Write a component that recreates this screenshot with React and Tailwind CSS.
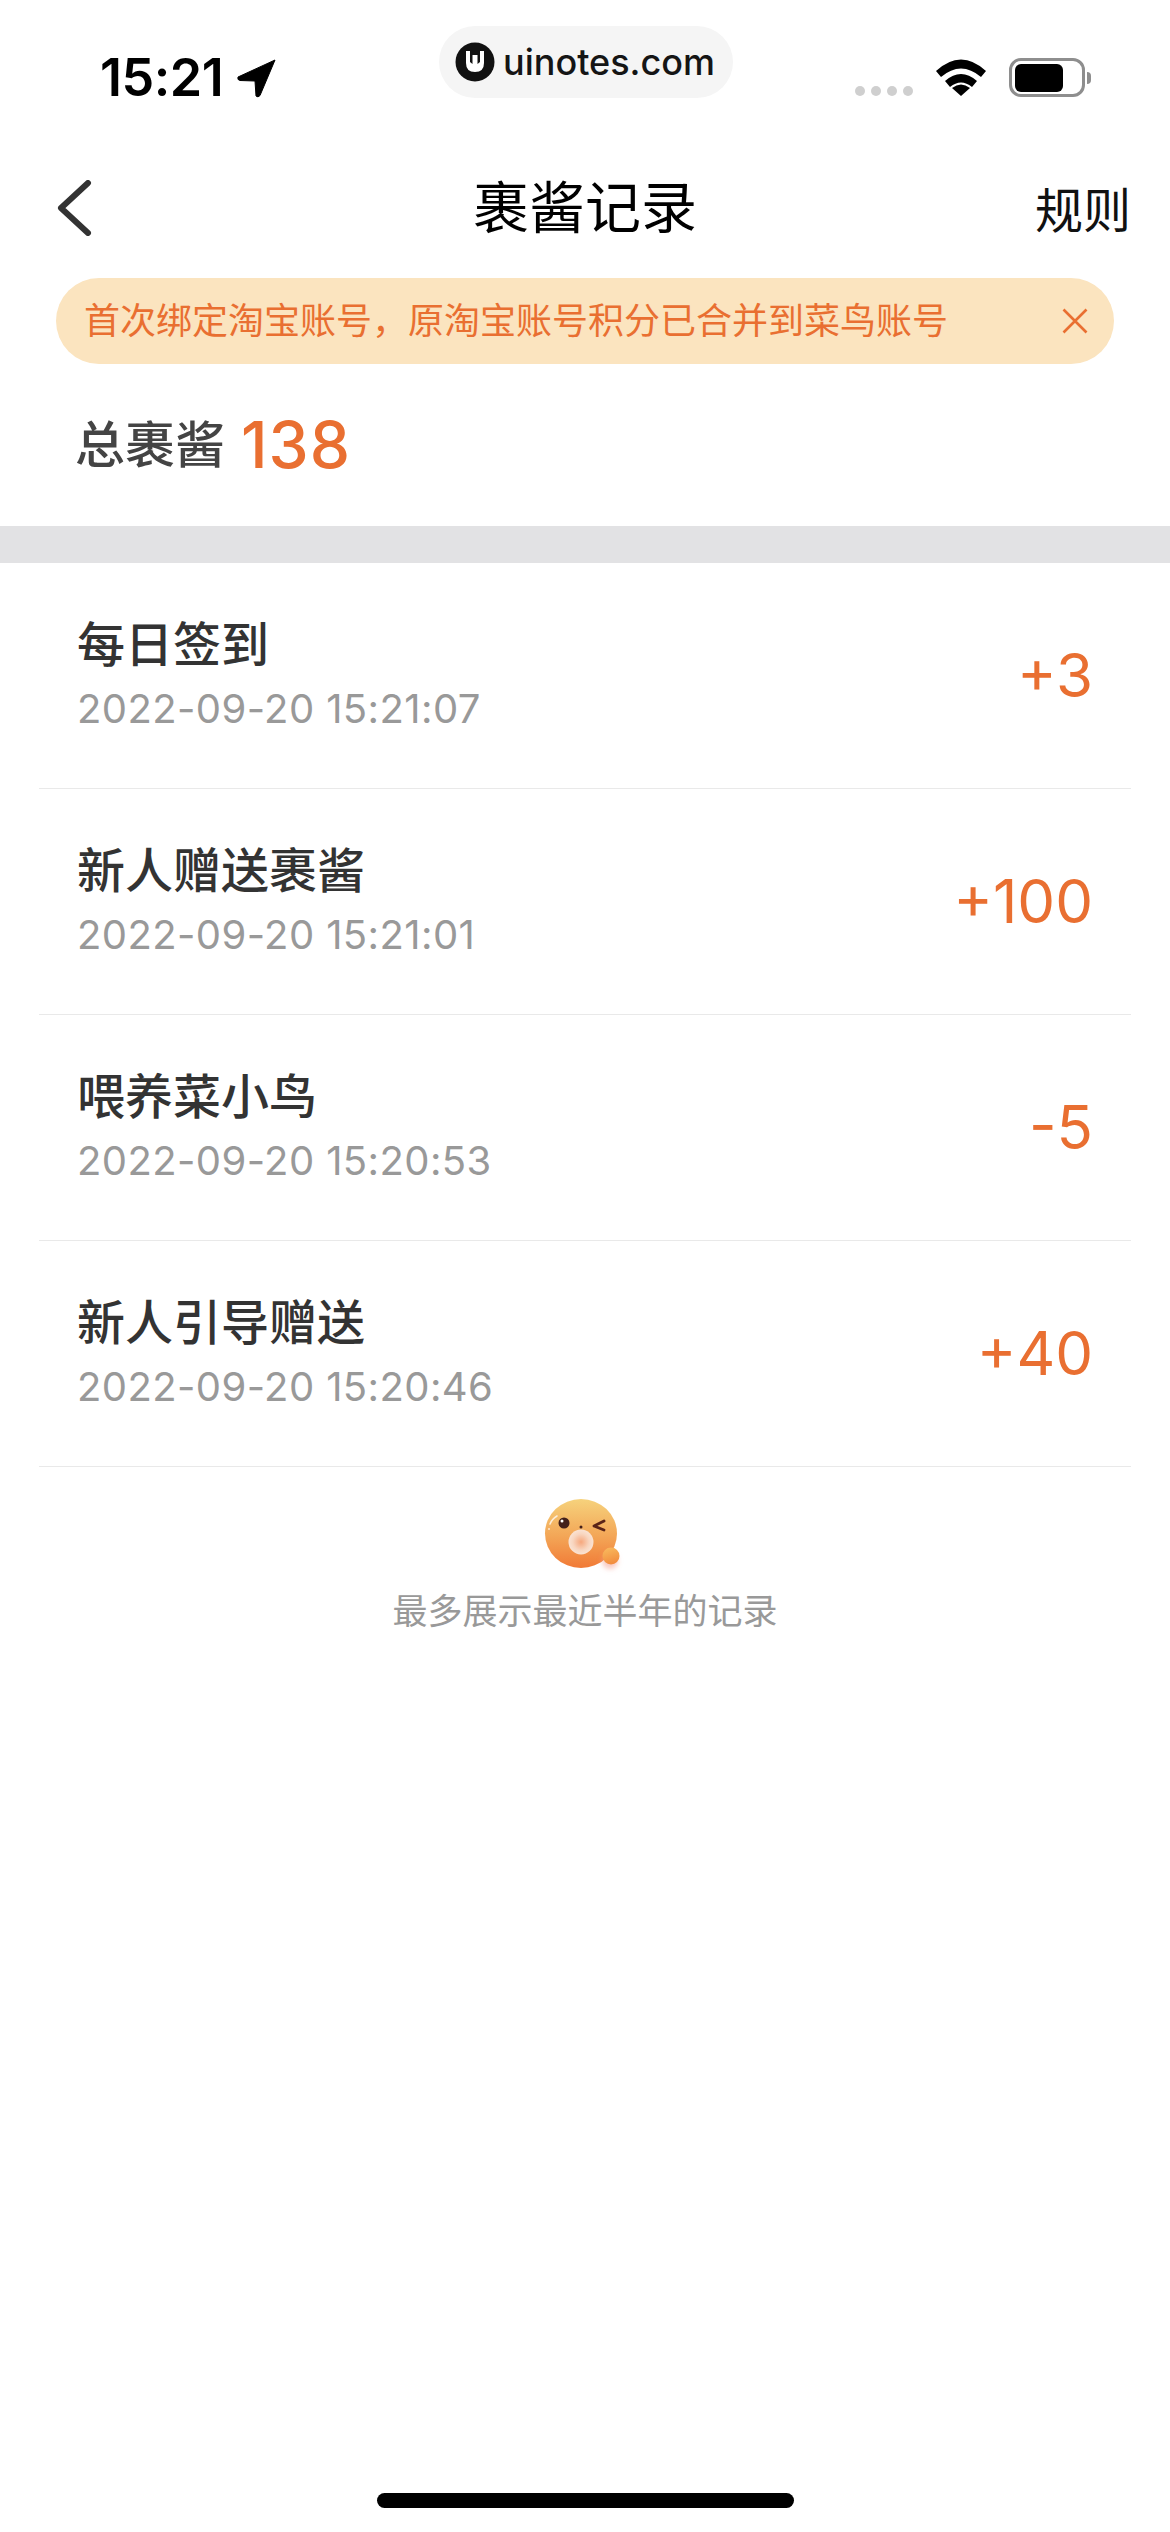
const rows = [
  { title: "每日签到", date: "2022-09-20 15:21:07", value: "+3" },
  { title: "新人赠送裹酱", date: "2022-09-20 15:21:01", value: "+100" },
  { title: "喂养菜小鸟", date: "2022-09-20 15:20:53", value: "-5" },
  { title: "新人引导赠送", date: "2022-09-20 15:20:46", value: "+40" },
];

function StatusBar() {
  return (
    <div className="relative flex h-[160px] items-start justify-between pl-[100px] pr-[79px] pt-[50px]">
      <div className="flex items-center gap-[14px] text-black">
        <span className="text-[52px] leading-[56px] font-semibold tracking-[-0.5px]">15:21</span>
        <svg width="39" height="39" viewBox="0 0 39 39"><path d="M38 1 L1 18 Q0 21 3 21.5 L18 22 L19 37 Q21 39 23 36.5 Z" fill="#000" stroke="#000" strokeWidth="1" strokeLinejoin="round" /></svg>
      </div>
      <div className="flex items-start gap-[23px] pt-[8px]">
        <div className="flex gap-[6px] pt-[28px]">
          <span className="h-[10px] w-[10px] rounded-full bg-[#cfcfcf]" />
          <span className="h-[10px] w-[10px] rounded-full bg-[#cfcfcf]" />
          <span className="h-[10px] w-[10px] rounded-full bg-[#cfcfcf]" />
          <span className="h-[10px] w-[10px] rounded-full bg-[#cfcfcf]" />
        </div>
        <svg width="50" height="37" viewBox="0 0 50 37" className="mt-[1px]">
          <path d="M0 12 Q25 -11 50 12 L45 18 Q25 1 5 18 Z" fill="#000" />
          <path d="M9 22 Q25 8 41 22 L36 28 Q25 19 14 28 Z" fill="#000" />
          <path d="M16 29 Q25 22 34 29 L25 37 Z" fill="#000" />
        </svg>
        <div className="flex items-center gap-[2px]">
          <div className="flex h-[39px] w-[76px] items-center rounded-[12px] border-[3px] border-[#8e8e8e] pl-[3px]">
            <div className="h-[28px] w-[48px] rounded-[6px] bg-black" />
          </div>
          <div className="h-[12px] w-[4px] rounded-r-full bg-[#8e8e8e]" />
        </div>
      </div>
      <div className="absolute left-[439px] top-[26px] flex h-[72px] w-[294px] items-center gap-[8px] rounded-full bg-[#f5f5f5] pl-[16px]">
        <svg width="40" height="40" viewBox="0 0 40 40">
          <circle cx="20" cy="20" r="19.5" fill="#111" />
          <path d="M11 9 V21 Q11 30 20 30 Q29 30 29 21 V9 H25 V20 L22.5 22 V13 H17.5 V22 L15 20 V9 Z" fill="#fff" />
        </svg>
        <span className="font-['Inter',sans-serif] text-[36px] leading-none font-medium text-[#151515]">uinotes.com</span>
      </div>
    </div>
  );
}

function Mascot() {
  return (
    <svg width="90" height="84" viewBox="0 0 90 84" className="block">
      <defs>
        <linearGradient id="body" x1="0.5" y1="0" x2="0.5" y2="1">
          <stop offset="0" stopColor="#f6d27c" />
          <stop offset="0.55" stopColor="#f3a556" />
          <stop offset="1" stopColor="#f17a36" />
        </linearGradient>
        <radialGradient id="bubble">
          <stop offset="0" stopColor="#f6a77c" />
          <stop offset="0.65" stopColor="#f8d6c0" />
          <stop offset="1" stopColor="#fae3d3" />
        </radialGradient>
        <linearGradient id="small" x1="0.3" y1="0" x2="0.6" y2="1">
          <stop offset="0" stopColor="#f8b95d" />
          <stop offset="1" stopColor="#f28a3c" />
        </linearGradient>
        <filter id="blur" x="-50%" y="-50%" width="200%" height="200%"><feGaussianBlur stdDeviation="2.5" /></filter>
      </defs>
      <ellipse cx="41" cy="36.5" rx="36" ry="34.5" fill="url(#body)" />
      <path d="M10 27 Q12 22 17 19" stroke="#fff" strokeOpacity="0.75" strokeWidth="1.6" fill="none" strokeLinecap="round" />
      <circle cx="9" cy="32" r="1" fill="#fff" fillOpacity="0.7" />
      <circle cx="24" cy="26" r="5.5" fill="#43201b" />
      <circle cx="22" cy="24" r="1.5" fill="#fff" />
      <circle cx="41" cy="30" r="1.5" fill="#43201b" />
      <path d="M64 24 L54 29 L64 33" stroke="#5a2418" strokeWidth="2.8" fill="none" strokeLinecap="round" strokeLinejoin="round" />
      <circle cx="41" cy="45" r="12.5" fill="url(#bubble)" />
      <circle cx="70" cy="64" r="8" fill="#f4a090" fillOpacity="0.55" filter="url(#blur)" />
      <circle cx="71" cy="59" r="8.5" fill="url(#small)" />
    </svg>
  );
}

export default function App() {
  return (
    <div className="flex h-[2532px] w-[1170px] flex-col overflow-hidden bg-white font-['Inter','Noto_Sans_CJK_SC',sans-serif]">
      <StatusBar />
      <div className="grid h-[96px] grid-cols-[1fr_auto_1fr] items-center px-[39px]">
        <svg width="36" height="56" viewBox="0 0 36 56" className="ml-[17px]">
          <path d="M32 3 L5 28 L32 53" stroke="#333" strokeWidth="6" fill="none" strokeLinecap="round" strokeLinejoin="round" />
        </svg>
        <div className="text-[56px] leading-none text-black">裹酱记录</div>
        <div className="mt-[5px] justify-self-end text-[48px] leading-none text-[#111]">规则</div>
      </div>
      <div className="mx-[56px] mt-[22px] flex h-[86px] items-center justify-between rounded-full bg-[#fbe4bf] pl-[28px] pr-[26px]">
        <span className="text-[36px] leading-none text-[#e96f31]">首次绑定淘宝账号，原淘宝账号积分已合并到菜鸟账号</span>
        <svg width="26" height="26" viewBox="0 0 26 26">
          <path d="M1.5 1.5 L24.5 24.5 M24.5 1.5 L1.5 24.5" stroke="#e96f31" strokeWidth="2.6" />
        </svg>
      </div>
      <div className="flex h-[162px] items-center gap-[16px] pl-[75px]">
        <span className="text-[50px] leading-none font-medium text-[#444]">总裹酱</span>
        <span className="text-[64px] leading-none font-medium tracking-[1px] text-[#e96f31]">138</span>
      </div>
      <div className="h-[37px] bg-[#e2e2e4]" />
      <div className="mx-[39px]">
        {rows.map((r) => (
          <div key={r.date} className="flex h-[226px] items-center justify-between border-b border-[#e9e9e9] pl-[38px] pr-[38px]">
            <div className="flex flex-col gap-[16px] pt-[3px]">
              <span className="text-[48px] leading-[48px] font-medium text-[#333]">{r.title}</span>
              <span className="text-[40px] leading-[48px] tracking-[0.4px] text-[#999]">{r.date}</span>
            </div>
            <span className="mb-[2px] text-[60px] leading-none text-[#e96f31]">{r.value}</span>
          </div>
        ))}
      </div>
      <div className="flex flex-col items-center pt-[30px]">
        <Mascot />
        <span className="mt-[13px] text-[35px] leading-none text-[#999]">最多展示最近半年的记录</span>
      </div>
      <div className="mx-auto mb-[24px] mt-auto h-[15px] w-[417px] rounded-full bg-black" />
    </div>
  );
}
